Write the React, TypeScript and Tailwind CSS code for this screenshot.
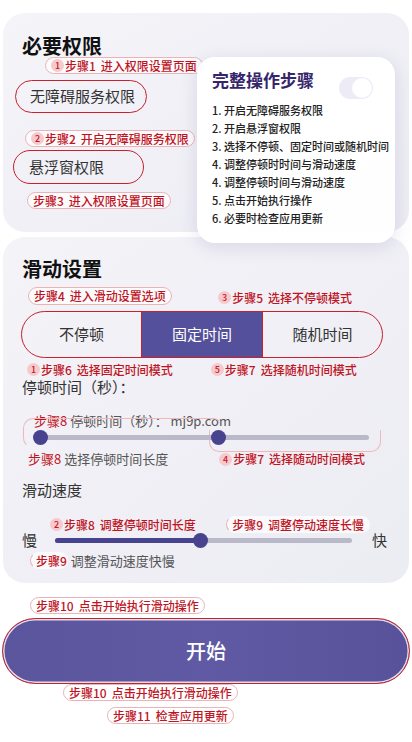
const FONT = { fontFamily: '"Noto Sans CJK SC", "Noto Sans", sans-serif' }

const STEPS = [
  '1. 开启无障碍服务权限',
  '2. 开启悬浮窗权限',
  '3. 选择不停顿、固定时间或随机时间',
  '4. 调整停顿时时间与滑动速度',
  '4. 调整停顿时间与滑动速度',
  '5. 点击开始执行操作',
  '6. 必要时检查应用更新',
]

function Num({ n }: { n: string }) {
  return (
    <span className="mr-[1px] inline-flex h-[13px] w-[13px] items-center justify-center rounded-full bg-[#f7c9cc] text-[9px] leading-none text-[#c41a2a]">
      {n}
    </span>
  )
}

// red annotation label
function Tag({ n, step, text, pill = true, className = '' }: { n?: string; step: string; text: string; pill?: boolean; className?: string }) {
  return (
    <div
      className={`flex h-[17px] items-center whitespace-nowrap text-[12px] font-medium leading-none text-[#c0141f] ${
        pill ? 'rounded-full border border-[#eab3b6] bg-white/70 px-[5px]' : ''
      } ${className}`}
    >
      {n && <Num n={n} />}
      <span>{step}</span>
      {text && <span className="ml-[5px]">{text}</span>}
    </div>
  )
}

function Thumb() {
  return <div className="h-[15px] w-[15px] shrink-0 rounded-full bg-[#48438f]" />
}

export default function App() {
  return (
    <div style={FONT} className="relative h-[742px] w-[412px] overflow-hidden bg-white text-[#222]">
      {/* Permissions card */}
      <div className="mx-[3px] mt-[13px] h-[219px] rounded-[22px] bg-gradient-to-br from-[#f4f4f9] to-[#ececf3] pt-[22px]">
        <h2 className="pl-[19px] text-[20px] font-bold leading-[22px] text-[#111]">必要权限</h2>
        <div className="flex pl-[42px]">
          <Tag n="1" step="步骤1" text="进入权限设置页面" />
        </div>
        <div className="ml-[12px] mt-[6px] flex h-[33px] w-[132px] items-center rounded-full border-[1.5px] border-[#c8202c] pl-[14px] text-[15px] text-[#333]">
          无障碍服务权限
        </div>
        <div className="mt-[17px] flex pl-[22px]">
          <Tag n="2" step="步骤2" text="开启无障碍服务权限" />
        </div>
        <div className="ml-[10px] mt-[3px] flex h-[34px] w-[131px] items-center rounded-full border-[1.5px] border-[#c8202c] pl-[15px] text-[15px] text-[#333]">
          悬浮窗权限
        </div>
        <div className="mt-[8px] flex pl-[24px]">
          <Tag step="步骤3" text="进入权限设置页面" />
        </div>
      </div>

      {/* Steps popup */}
      <div className="absolute left-[197px] top-[57px] h-[186px] w-[198px] rounded-[18px] bg-white/95 pl-[15px] pt-[12px] shadow-[0_4px_18px_rgba(80,70,140,0.15)]">
        <div className="absolute right-[22px] top-[20px] h-[22px] w-[34px] rounded-full bg-[#e6e4f3] opacity-70">
          <div className="absolute right-[1px] top-[1px] h-[20px] w-[20px] rounded-full bg-white" />
        </div>
        <h3 className="text-[17px] font-bold leading-[22px] text-[#35266b]">完整操作步骤</h3>
        <ul className="mt-[10px] text-[11px] font-medium leading-[18px] text-[#222]">
          {STEPS.map((s, i) => (
            <li key={i}>{s}</li>
          ))}
        </ul>
      </div>

      {/* Slide settings card */}
      <div className="mx-[3px] mt-[5px] h-[346px] rounded-[22px] bg-gradient-to-br from-[#f3f3f8] to-[#ececf3] pt-[19px]">
        <h2 className="pl-[19px] text-[20px] font-bold leading-[26px] text-[#111]">滑动设置</h2>
        <div className="mt-[3px] flex items-center justify-between pl-[25px] pr-[57px]">
          <Tag step="步骤4" text="进入滑动设置选项" className="h-[18px]" />
          <Tag n="3" step="步骤5" text="选择不停顿模式" pill={false} className="mt-[4px]" />
        </div>
        <div className="ml-[18px] mt-[5px] flex h-[47px] w-[362px] overflow-hidden rounded-full border-[1.5px] border-[#c8202c] text-[15px]">
          <div className="flex flex-1 items-center justify-center text-[#333]">不停顿</div>
          <div className="flex w-[122px] items-center justify-center border-x-[1.5px] border-[#c8202c] bg-[#55509b] text-white">
            固定时间
          </div>
          <div className="flex flex-1 items-center justify-center text-[#333]">随机时间</div>
        </div>
        <div className="mt-[3px] flex gap-[38px] pl-[24px]">
          <Tag n="1" step="步骤6" text="选择固定时间模式" pill={false} />
          <Tag n="5" step="步骤7" text="选择随机时间模式" pill={false} />
        </div>
        <div className="mt-[-2px] pl-[19px] text-[15px] leading-[22px] text-[#333]">停顿时间（秒）：</div>

        <div className="relative mt-[14px] pl-[31px] text-[13px] leading-[18px] text-[#555]">
          <span className="text-[#c0141f]">步骤8</span> 停顿时间（秒）： mj9p.com
        </div>
        <div className="relative ml-[30px] flex h-[15px] w-[336px] items-center">
          <div className="absolute left-[-10px] top-[-12px] h-[30px] w-[200px] rounded-[10px] border border-[#efb8bb] border-b-transparent border-r-transparent" />
          <div className="absolute left-[176px] top-[0px] h-[22px] w-[172px] rounded-b-[10px] border border-[#efb8bb] border-t-transparent" />
          <div className="absolute left-[4px] right-[0px] h-[5px] rounded-full bg-[#b9b9c9]" />
          <div className="absolute left-[0px]">
            <Thumb />
          </div>
          <div className="absolute left-[178px]">
            <Thumb />
          </div>
        </div>
        <div className="mt-[5px] flex items-center justify-between pl-[25px] pr-[44px] text-[13px] leading-[18px]">
          <div className="text-[#555]">
            <span className="text-[#c0141f]">步骤8</span> 选择停顿时间长度
          </div>
          <Tag n="4" step="步骤7" text="选择随动时间模式" pill={false} />
        </div>

        <div className="mt-[11px] pl-[19px] text-[15px] leading-[22px] text-[#333]">滑动速度</div>
        <div className="mt-[15px] flex items-center justify-between pl-[47px] pr-[39px]">
          <Tag n="2" step="步骤8" text="调整停顿时间长度" pill={false} />
          <Tag step="步骤9" text="调整停动速度长慢" className="border-y-transparent border-r-transparent bg-transparent" />
        </div>
        <div className="mt-[-5px] flex items-center pl-[19px] text-[15px] text-[#333]">
          <span className="leading-[24px]">慢</span>
          <div className="relative ml-[18px] flex h-[15px] w-[297px] items-center">
            <div className="absolute left-0 right-0 h-[5px] rounded-full bg-[#b9b9c9]" />
            <div className="absolute left-0 h-[5px] w-[145px] rounded-full bg-[#48438f]" />
            <div className="absolute left-[138px]">
              <Thumb />
            </div>
          </div>
          <span className="ml-[20px] leading-[24px]">快</span>
        </div>
        <div className="flex items-center pl-[27px]">
          <Tag step="步骤9" text="" className="border-y-transparent border-r-transparent bg-transparent pr-0" />
          <span className="ml-[3px] text-[13px] leading-[17px] text-[#555]">调整滑动速度快慢</span>
        </div>
      </div>

      {/* Start */}
      <div className="mt-[14px] flex pl-[30px]">
        <Tag step="步骤10" text="点击开始执行滑动操作" />
      </div>
      <div className="mx-[2px] mt-[4px] flex h-[66px] items-center justify-center rounded-full border-[1.5px] border-[#c8202c] bg-gradient-to-r from-[#5a559c] via-[#5f5aa3] to-[#57529a] text-[20px] font-medium text-white shadow-[inset_0_0_0_1.5px_rgba(255,255,255,0.8)]">
        开始
      </div>
      <div className="flex pl-[63px]">
        <Tag step="步骤10" text="点击开始执行滑动操作" />
      </div>
      <div className="mt-[6px] flex pl-[107px]">
        <Tag step="步骤11" text="检查应用更新" />
      </div>
    </div>
  )
}
